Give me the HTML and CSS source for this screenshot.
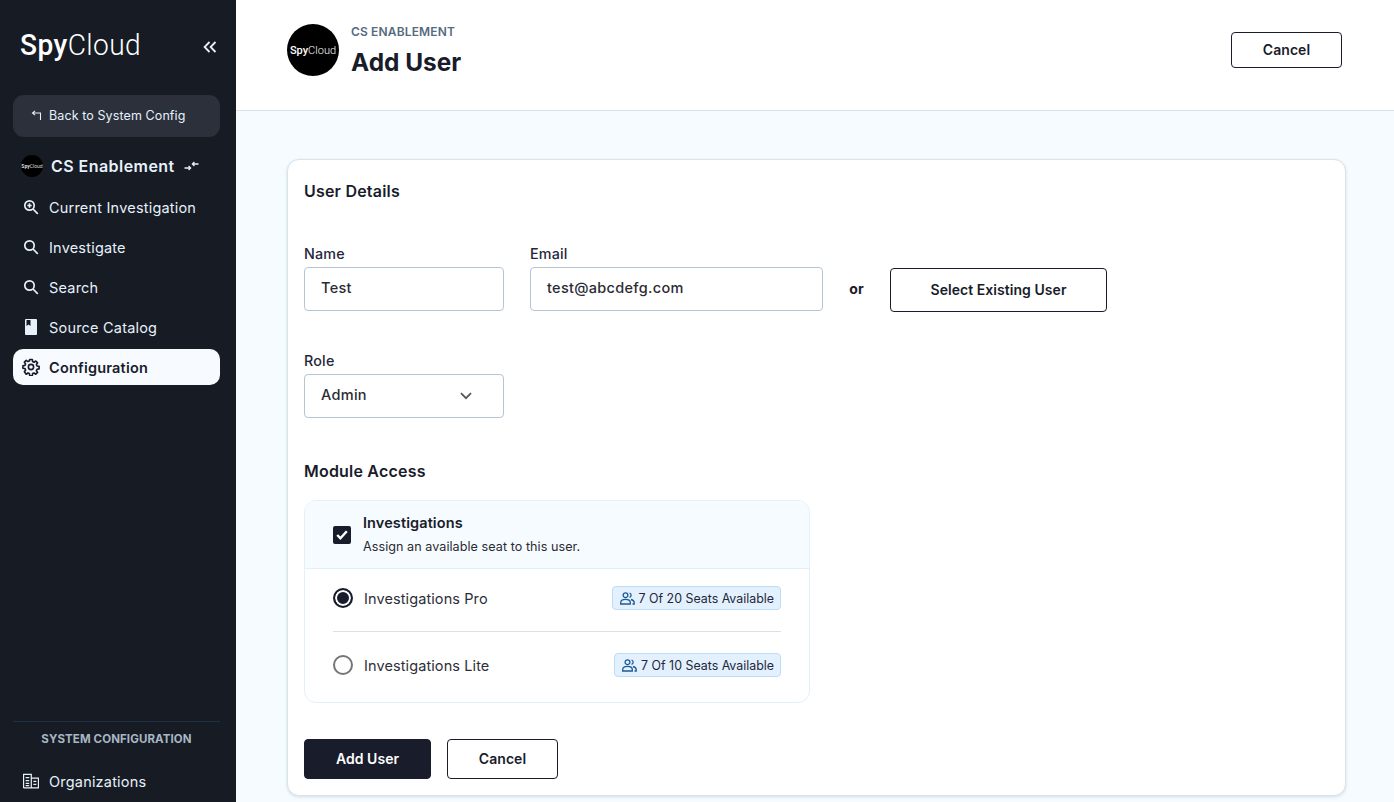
FILE: index.html
```html
<!DOCTYPE html>
<html lang="en">
<head>
<meta charset="utf-8">
<title>Add User</title>
<link rel="stylesheet" href="styles.css">
</head>
<body>
<div class="app">
  <aside class="sidebar">
    <div class="brand">
      <span class="logo"><b>Spy</b>Cloud</span>
      <svg class="collapse" width="14" height="14" viewBox="0 0 14 14" fill="none" stroke="#e6f1fb" stroke-width="1.8"><path d="M6.500 2 1.600 7l4.900 5M12.500 2 7.600 7l4.900 5"/></svg>
    </div>
    <a class="back">
      <svg width="12" height="12" viewBox="0 0 12 12" fill="none" stroke="#e6f1fb" stroke-width="1.100"><path d="M4 1.800 1.500 4 4 6.200M1.500 4H9.500V11"/></svg>
      <span>Back to System Config</span>
    </a>
    <div class="org">
      <span class="org-avatar"><span class="mini-logo"><b>Spy</b>Cloud</span></span>
      <span class="org-name">CS Enablement</span>
      <svg width="15" height="10" viewBox="0 0 15 10" fill="none" stroke="#e6f1fb" stroke-width="1.300"><path d="M.5 7H6.500M4.600 5 6.600 7 4.600 9M14.500 3H8.500M10.400 1 8.400 3 10.400 5"/></svg>
    </div>
    <nav class="nav">
      <a class="nav-item">
        <svg width="16" height="16" viewBox="0 0 16 16" fill="none" stroke="#e6f1fb" stroke-width="1.700"><circle cx="6.500" cy="6.500" r="4.700"/><path d="m10 10 4.800 4.800M6.500 4.300v4.400M4.300 6.500h4.400"/></svg>
        <span>Current Investigation</span>
      </a>
      <a class="nav-item">
        <svg width="16" height="16" viewBox="0 0 16 16" fill="none" stroke="#e6f1fb" stroke-width="1.700"><circle cx="6.500" cy="6.500" r="4.700"/><path d="m10 10 4.800 4.800"/></svg>
        <span>Investigate</span>
      </a>
      <a class="nav-item">
        <svg width="16" height="16" viewBox="0 0 16 16" fill="none" stroke="#e6f1fb" stroke-width="1.700"><circle cx="6.500" cy="6.500" r="4.700"/><path d="m10 10 4.800 4.800"/></svg>
        <span>Search</span>
      </a>
      <a class="nav-item">
        <svg width="16" height="16" viewBox="0 0 16 16"><path fill="#e6f1fb" d="M3 0H13a1 1 0 0 1 1 1v14a1 1 0 0 1-1 1H3a1 1 0 0 1-1-1V1a1 1 0 0 1 1-1Z"/><path fill="#161b24" d="M3.500 1H7.500V7L5.500 5.500 3.500 7Z"/></svg>
        <span>Source Catalog</span>
      </a>
      <a class="nav-item active">
        <svg class="gear" width="18" height="18" viewBox="0 0 24 24" fill="none" stroke="#191c2b" stroke-width="2.200"><path d="M10.300 2h3.400l.5 2.800 1.900.8 2.300-1.600 2.400 2.400-1.600 2.300.8 1.900 2.800.5v3.400l-2.800.5-.8 1.900 1.600 2.300-2.400 2.400-2.300-1.600-1.900.8-.5 2.800h-3.400l-.5-2.800-1.900-.8-2.300 1.600L3.200 18.400l1.600-2.300-.8-1.900-2.800-.5v-3.400l2.800-.5.8-1.900-1.600-2.300 2.400-2.400 2.300 1.600 1.900-.8Z" stroke-linejoin="round"/><circle cx="12" cy="12" r="3.500"/></svg>
        <span>Configuration</span>
      </a>
    </nav>
    <div class="side-foot">
      <div class="foot-title">SYSTEM CONFIGURATION</div>
      <a class="nav-item">
        <svg width="17" height="16" viewBox="0 0 17 16" fill="none" stroke="#e6f1fb" stroke-width="1.300"><path d="M.6 15.400V1h8.200v14.400M8.800 5h7.600v10.400H.6M2.800 4.500h3.800M2.800 7.500h3.800M2.800 10.500h3.800M2.800 13h3.800M11 8.500h3.200M11 11.500h3.200"/></svg>
        <span>Organizations</span>
      </a>
    </div>
  </aside>
  <main class="main">
    <header class="page-head">
      <span class="avatar"><span class="avatar-logo"><b>Spy</b>Cloud</span></span>
      <div class="titles">
        <div class="eyebrow">CS ENABLEMENT</div>
        <h1>Add User</h1>
      </div>
      <button class="btn btn-outline head-cancel">Cancel</button>
    </header>
    <div class="content">
      <section class="card">
        <h2>User Details</h2>
        <div class="row">
          <label class="field field-name">
            <span class="label">Name</span>
            <span class="input">Test</span>
          </label>
          <label class="field field-email">
            <span class="label">Email</span>
            <span class="input">test@abcdefg.com</span>
          </label>
          <span class="or">or</span>
          <button class="btn btn-outline btn-existing">Select Existing User</button>
        </div>
        <label class="field field-role">
          <span class="label">Role</span>
          <span class="input select">Admin
            <svg class="chevron" width="12" height="8" viewBox="0 0 12 8" fill="none" stroke="#555" stroke-width="1.700"><path d="m1 1.200 5 5 5-5"/></svg>
          </span>
        </label>
        <h2 class="module-title">Module Access</h2>
        <div class="panel">
          <div class="panel-head">
            <span class="check"><svg width="12" height="10" viewBox="0 0 12 10" fill="none" stroke="#fff" stroke-width="2.400"><path d="m1.200 5 3.200 3.200 6.400-7"/></svg></span>
            <div>
              <div class="panel-title">Investigations</div>
              <div class="panel-sub">Assign an available seat to this user.</div>
            </div>
          </div>
          <div class="options">
            <div class="option option-first">
              <span class="radio radio-on"></span>
              <span class="option-name">Investigations Pro</span>
              <span class="badge">
                <svg width="15" height="13" viewBox="0 0 15 13" fill="none" stroke="#1e5a96" stroke-width="1.300"><circle cx="5.500" cy="3.200" r="2.400"/><path d="M.7 12v-1.500c0-2 1.600-3.200 4.800-3.200s4.800 1.200 4.800 3.200V12ZM9.500 1a2.300 2.300 0 0 1 0 4.400M11 7.500c1.900.5 3.200 1.500 3.200 3V12h-1.700"/></svg>
                7 Of 20 Seats Available
              </span>
            </div>
            <div class="option option-last">
              <span class="radio"></span>
              <span class="option-name">Investigations Lite</span>
              <span class="badge">
                <svg width="15" height="13" viewBox="0 0 15 13" fill="none" stroke="#1e5a96" stroke-width="1.300"><circle cx="5.500" cy="3.200" r="2.400"/><path d="M.7 12v-1.500c0-2 1.600-3.200 4.800-3.200s4.800 1.200 4.800 3.200V12ZM9.500 1a2.300 2.300 0 0 1 0 4.400M11 7.500c1.900.5 3.200 1.500 3.200 3V12h-1.700"/></svg>
                7 Of 10 Seats Available
              </span>
            </div>
          </div>
        </div>
        <div class="actions">
          <button class="btn btn-primary">Add User</button>
          <button class="btn btn-outline btn-cancel">Cancel</button>
        </div>
      </section>
    </div>
  </main>
</div>
</body>
</html>
```

FILE: styles.css
```css
* { box-sizing: border-box; }
html, body { margin: 0; height: 100%; overflow: hidden; }
body { font-family: Inter, "Noto Sans", sans-serif; color: #191c2b; background: #f5fbff; }
h1, h2 { margin: 0; }
.app { display: flex; height: 802px; }

.sidebar {
  width: 236px; flex: none; background: #161b24;
  padding: 0 16px 0 13px; display: flex; flex-direction: column; color: #e6f1fb;
}
.brand { height: 95px; display: flex; align-items: center; justify-content: space-between; padding: 0 3px 5px 7px; }
.logo { font-family: Roboto, sans-serif; font-weight: 300; font-size: 29px; letter-spacing: .4px; color: #fff; transform: scaleX(.97); transform-origin: left; }
.logo b { font-weight: 500; }
.collapse { margin-top: 4px; }
.back {
  height: 42px; background: #2b303b; border-radius: 11px; display: flex; align-items: center;
  gap: 6px; padding: 0 0 2px 18px; font-size: 12.500px; font-weight: 400; letter-spacing: .1px;
}
.org { height: 30px; margin-top: 14px; display: flex; align-items: center; padding-left: 8px; }
.org-avatar { width: 22px; height: 22px; border-radius: 50%; background: #000; display: flex; align-items: center; justify-content: center; overflow: hidden; flex: none; }
.mini-logo { font-family: Roboto, sans-serif; font-size: 5px; color: #ddd; white-space: nowrap; }
.org-name { font-size: 16px; font-weight: 600; margin: 0 9px 0 8px; letter-spacing: .45px; white-space: nowrap; }
.nav { display: flex; flex-direction: column; gap: 4px; margin-top: 8px; }
.nav-item {
  height: 36px; display: flex; align-items: center; gap: 10px; padding-left: 10px;
  font-size: 14.500px; letter-spacing: .2px; color: #e6f1fb; border-radius: 10px;
}
.nav-item svg { flex: none; width: 16px; }
.nav-item svg.gear { width: 18px; margin: 0 -1px; }
.nav-item.active { background: #f7fbff; color: #191c2b; font-weight: 600; }
.side-foot { margin-top: auto; border-top: 1px solid #1f3244; }
.foot-title { text-align: center; font-size: 11.500px; font-weight: 700; color: #a8b6c4; padding-top: 10px; height: 42px; letter-spacing: .1px; }
.side-foot .nav-item { margin-bottom: 2px; padding-bottom: 2px; height: 36px; }

.main { flex: 1; min-width: 0; display: flex; flex-direction: column; }
.page-head {
  height: 111px; flex: none; background: #fff; border-bottom: 1px solid #d7e2ea;
  display: flex; align-items: center; padding: 0 52px 10px 51px;
}
.avatar { width: 52px; height: 52px; border-radius: 50%; background: #000; display: flex; align-items: center; justify-content: center; flex: none; overflow: hidden; }
.avatar-logo { font-family: Roboto, sans-serif; font-size: 11px; font-weight: 300; color: #fff; white-space: nowrap; }
.avatar-logo b { font-weight: 500; }
.titles { margin-left: 12px; }
.eyebrow { font-size: 12px; font-weight: 600; color: #566a80; letter-spacing: .15px; line-height: 15px; }
h1 { font-size: 24.400px; font-weight: 700; line-height: 30px; margin-top: 8px; color: #191c2b; letter-spacing: 0; }
.btn { font-family: inherit; font-size: 14px; font-weight: 600; border-radius: 4px; display: flex; align-items: center; justify-content: center; padding: 0 0 2px; letter-spacing: .05px; }
.btn-outline { background: #fff; border: 1px solid #191c2b; color: #191c2b; }
.btn-primary { background: #191c2b; border: 1px solid #191c2b; color: #fff; width: 127px; height: 40px; }
.head-cancel { margin-left: auto; width: 111px; height: 36px; }

.content { flex: 1; min-height: 0; padding: 48px 48px 0 51px; }
.card {
  width: 1059px; height: 637px; background: #fff; border: 1px solid #d8e3ea; border-radius: 12px;
  padding: 21px 16px 0; box-shadow: 0 1px 3px rgba(30, 60, 90, .15);
}
h2 { font-size: 16px; font-weight: 600; line-height: 20px; letter-spacing: .2px; }
.row { display: flex; align-items: flex-end; margin-top: 44px; }
.field { display: flex; flex-direction: column; }
.label { font-size: 14.300px; font-weight: 500; line-height: 17px; height: 22px; letter-spacing: .2px; color: #24273a; }
.input {
  height: 44px; border: 1px solid #b3c6d6; border-radius: 4px; padding: 0 16px 4px; display: flex;
  align-items: center; font-size: 14.500px; font-weight: 500; color: #2b2b33; background: #fff; letter-spacing: .3px;
}
.field-name, .field-role { width: 200px; }
.field-email { width: 293px; margin-left: 26px; }
.or { width: 67px; text-align: center; font-weight: 700; font-size: 14px; line-height: 44px; }
.btn-existing { width: 217px; height: 44px; margin-bottom: -1px; }
.field-role { margin-top: 41px; }
.select { justify-content: space-between; padding-right: 31px; }
.chevron { margin-top: 4px; }
.module-title { margin-top: 43px; }
.panel { width: 506px; height: 203px; margin-top: 19px; border: 1px solid #e4f0f8; border-radius: 12px; overflow: hidden; }
.panel-head { height: 68px; background: #f5fbff; border-bottom: 1px solid #e4f0f8; display: flex; align-items: center; padding: 0 28px; gap: 12px; }
.check { width: 18px; height: 18px; border-radius: 2px; background: #191c2b; display: flex; align-items: center; justify-content: center; flex: none; }
.panel-title { font-size: 14.500px; font-weight: 600; line-height: 18px; letter-spacing: .1px; }
.panel-sub { font-size: 12.600px; line-height: 16px; margin-top: 7px; color: #2b2b33; letter-spacing: .05px; }
.options { padding: 0 28px; }
.option { height: 67px; display: flex; align-items: center; }
.option-first { height: 63px; padding-bottom: 4px; border-bottom: 1px solid #e0e0e0; }
.option-last { padding-bottom: 1px; }
.radio { width: 20px; height: 20px; border-radius: 50%; border: 2px solid #757575; background: #fff; flex: none; }
.radio-on { border-color: #191c2b; background: #191c2b; box-shadow: inset 0 0 0 2px #fff; }
.option-name { margin-left: 11px; font-size: 14.500px; color: #2e2e38; letter-spacing: .1px; }
.badge {
  margin-left: auto; height: 24px; display: flex; align-items: center; gap: 4px; padding: 0 6px 0 7px;
  background: #e2f1fd; border: 1px solid #bcdcf8; border-radius: 4px; font-size: 12.400px; color: #24273a; white-space: nowrap;
}
.actions { display: flex; gap: 16px; margin-top: 36px; }
.btn-cancel { width: 111px; height: 40px; }
```
